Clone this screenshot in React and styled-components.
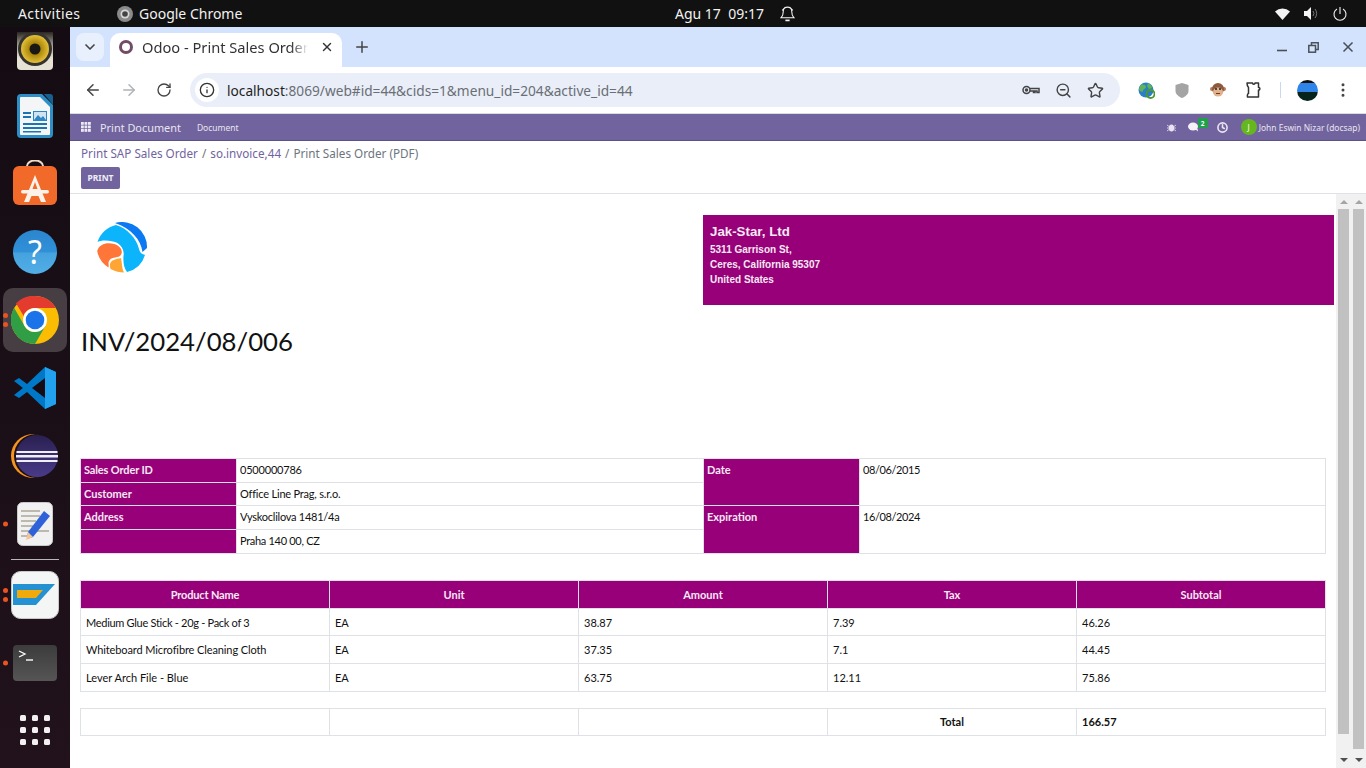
import React from 'react';
import styled, { createGlobalStyle } from 'styled-components';
import { ArrowLeft, ArrowRight, RotateCw, Star, ChevronDown, Plus, X, MoreVertical, ZoomOut, Clock, Info } from 'lucide-react';

const Global = createGlobalStyle`
  html, body { margin: 0; padding: 0; height: 768px; overflow: hidden; background: #fff; }
  * { box-sizing: border-box; }
  #root { height: 768px; }
`;
const Screen = styled.div`display:flex;flex-direction:column;width:1366px;height:768px;overflow:hidden;font-family:"Noto Sans",sans-serif;`;
const TopBar = styled.div`height:27px;flex:none;background:#111;color:#f2f2f2;display:flex;align-items:center;font-size:14px;position:relative;`;
const Activities = styled.span`margin-left:18px;width:99px;letter-spacing:.4px;`;
const AppName = styled.span`display:flex;align-items:center;gap:6px;`;
const Clocky = styled.div`position:absolute;left:675px;top:0;height:27px;display:flex;align-items:center;gap:16px;font-size:14px;`;
const Status = styled.div`margin-left:auto;display:flex;align-items:center;gap:14px;padding-right:19px;`;
const Body = styled.div`flex:1;display:flex;min-height:0;`;
const Dock = styled.div`width:70px;flex:none;background:linear-gradient(180deg,#140c12,#21121c);display:flex;flex-direction:column;align-items:center;position:relative;overflow:hidden;`;
const DockItem = styled.div`margin-top:${p=>p.$top}px;height:${p=>p.$h}px;display:flex;align-items:center;justify-content:center;flex:none;position:relative;width:${p=>p.$active?64:48}px;border-radius:${p=>p.$active?10:0}px;background:${p=>p.$active?'#473e43':'transparent'};`;
const DockSep = styled.div`margin-top:13px;width:48px;height:1px;flex:none;background:#b9b5b8;`;
const Dots = styled.div`position:absolute;left:${p=>p.$left}px;top:50%;transform:translateY(-50%);display:flex;flex-direction:column;gap:4px;`;
const Dot = styled.i`display:block;width:5px;height:5px;border-radius:50%;background:#e95420;`;
const Browser = styled.div`flex:1;display:flex;flex-direction:column;min-width:0;`;
const TabStrip = styled.div`height:40px;flex:none;background:#d3e3fd;display:flex;align-items:flex-start;padding:6px 0 0 6px;color:#444;`;
const TabMenu = styled.div`width:28px;height:28px;border-radius:8px;background:#e9f0fd;display:flex;align-items:center;justify-content:center;`;
const Tab = styled.div`margin-left:6px;width:232px;height:34px;background:#fff;border-radius:10px 10px 0 0;display:flex;align-items:center;padding:0 8px 6px 9px;font-size:14.65px;color:#333;`;
const TabRing = styled.span`width:14px;height:14px;border-radius:50%;border:3px solid #714b67;flex:none;margin-right:9px;`;
const TabTitle = styled.span`flex:1;margin-right:12px;white-space:nowrap;overflow:hidden;-webkit-mask-image:linear-gradient(90deg,#000 90%,transparent);mask-image:linear-gradient(90deg,#000 90%,transparent);`;
const NewTab = styled.div`margin:5px 0 0 11px;display:flex;`;
const WinBtns = styled.div`margin-left:auto;display:flex;align-items:center;gap:21px;height:28px;padding-right:10px;color:#4a5058;`;
const Toolbar = styled.div`height:47px;flex:none;background:#fff;border-radius:8px 8px 0 0;display:flex;align-items:center;padding:0 0 0 14px;border-bottom:1px solid #dcdcdc;color:#444;`;
const NavBtns = styled.div`display:flex;align-items:center;gap:18px;width:106px;`;
const Omni = styled.div`width:930px;height:34px;border-radius:17px;background:#e9eef8;display:flex;align-items:center;padding:0 16px 0 5px;font-size:13.7px;color:#6a6e75;`;
const InfoChip = styled.span`width:24px;height:24px;border-radius:50%;background:#fff;display:flex;align-items:center;justify-content:center;margin-right:8px;color:#333;`;
const Host = styled.span`color:#1f1f1f;`;
const OmniIcons = styled.div`margin-left:auto;display:flex;align-items:center;gap:15px;color:#444;`;
const Exts = styled.div`display:flex;align-items:center;margin-left:8px;`;
const ExtSlot = styled.span`width:36px;display:flex;justify-content:center;align-items:center;`;
const ExtDivider = styled.span`width:1px;height:16px;background:#c8d8f3;margin:0 16px 0 8px;`;
const Avatar = styled.span`width:21px;height:21px;border-radius:50%;overflow:hidden;background:linear-gradient(180deg,#111 0 15%,#2f84ea 15% 55%,#06231c 55%);margin-right:16px;`;
const OdooNav = styled.div`height:27px;flex:none;background:#71639e;border-bottom:1px solid #5d5286;color:#e8e5f0;display:flex;align-items:center;padding:0 6px 0 11px;font-size:11px;`;
const Brand = styled.span`font-size:10.9px;margin:0 16px 0 9px;`;
const MenuItem = styled.span`font-size:8.5px;`;
const NavRight = styled.div`margin-left:auto;display:flex;align-items:center;font-size:8.45px;`;
const Bubble = styled.span`position:relative;display:flex;margin:0 18px 0 12px;`;
const Badge = styled.span`position:absolute;left:10px;top:-4px;width:10px;height:10px;background:#21a04c;color:#fff;font-size:6.5px;font-weight:700;border-radius:1px;display:flex;align-items:center;justify-content:center;`;
const UserDot = styled.span`width:16px;height:16px;border-radius:50%;background:#66b71e;color:#fff;font-size:8px;display:flex;align-items:center;justify-content:center;margin:0 2px 0 13px;`;
const Control = styled.div`height:53px;flex:none;border-bottom:1px solid #dee2e6;padding:4px 11px 0;background:#fff;`;
const Crumbs = styled.div`font-size:11.7px;color:#71639e;height:17px;line-height:17px;display:flex;gap:4px;`;
const CrumbLast = styled.span`color:#6c757d;`;
const PrintBtn = styled.button`display:block;margin-top:5px;width:39px;height:22px;padding:0 0 2px;border:none;border-radius:2px;background:#71639e;color:#f0eef6;font:700 8.5px "Noto Sans",sans-serif;`;
const Content = styled.div`flex:1;display:flex;min-height:0;background:#fff;`;
const Doc = styled.div`width:1266px;flex:none;padding:21px 2px 0 10px;font-family:Lato,sans-serif;overflow:hidden;`;
const Head = styled.div`display:flex;height:90px;`;
const LogoCell = styled.div`width:623px;flex:none;padding:7px 0 0 17px;`;
const Company = styled.div`flex:1;background:#970079;color:#f7e9f4;font:700 10px/15px "Liberation Sans",sans-serif;padding:8px 7px;`;
const CompanyName = styled.div`font-size:13.3px;line-height:17px;margin-bottom:2px;`;
const Title = styled.h1`margin:20px 0 0 1px;height:133px;font:400 25.75px/33px Lato,sans-serif;color:#111;`;
const Tbl = styled.table`border-collapse:collapse;table-layout:fixed;width:1245px;font-size:11px;color:#111;margin-bottom:${p=>p.$mb||0}px;`;
const Col = styled.col`width:${p=>p.$w}px;`;
const Lab = styled.td`background:#970079;color:#f7e9f4;font-weight:700;border:1px solid #dee2e6;padding:0 3px 2px;vertical-align:middle;height:23.7px;letter-spacing:${p=>p.$ls||0}px;${p=>p.$top&&'vertical-align:top;padding-top:4px;'}`;
const Val = styled.td`border:1px solid #dee2e6;padding:0 3px 2px;height:23.7px;vertical-align:middle;letter-spacing:${p=>p.$ls||0}px;${p=>p.$top&&'vertical-align:top;padding-top:4px;'}`;
const Th = styled.th`background:#970079;color:#f7e9f4;font-weight:700;border:1px solid #dee2e6;height:28px;padding:0;text-align:center;letter-spacing:${p=>p.$ls||0}px;`;
const Td = styled.td`border:1px solid #dee2e6;height:${p=>p.$h||27.7}px;padding:0 5px;letter-spacing:${p=>p.$ls||0}px;${p=>p.$b&&'font-weight:700;'}${p=>p.$c&&'text-align:center;'}`;
const Scrolls = styled.div`flex:1;background:#f1f1f1;display:flex;justify-content:space-between;padding:0 0 0 2px;`;
const Bar = styled.div`width:11px;display:flex;flex-direction:column;align-items:center;margin-right:${p=>p.$mr||0}px;`;
const Thumb = styled.div`width:100%;height:${p=>p.$h}px;background:#c1c1c1;flex:none;`;
const ArrowUp = styled.i`display:block;margin:6px 0 5px;width:0;height:0;border:4px solid transparent;border-top:0;border-bottom:4px solid #a5a5a5;`;
const ArrowDown = styled.i`display:block;margin-top:${p=>p.$mt}px;width:0;height:0;border:4px solid transparent;border-bottom:0;border-top:4px solid #505050;`;

const Speaker = () => (<svg width="36" height="38" viewBox="0 0 36 38"><defs><linearGradient id="sp" x1="0" y1="0" x2="0" y2="1"><stop offset="0" stopColor="#2a2622"/><stop offset=".35" stopColor="#a39f92"/><stop offset=".7" stopColor="#e6e2d6"/></linearGradient><radialGradient id="go"><stop offset=".4" stopColor="#a98408"/><stop offset="1" stopColor="#e3bf3a"/></radialGradient></defs><path d="M0 0h36v34a4 4 0 0 1-4 4H4a4 4 0 0 1-4-4z" fill="url(#sp)"/><circle cx="18" cy="17" r="17" fill="#34332f"/><circle cx="18" cy="17" r="14" fill="url(#go)"/><circle cx="18" cy="17" r="5.500" fill="#191814"/></svg>);
const Writer = () => (<svg width="36" height="44" viewBox="0 0 36 44"><path d="M4 0h21l11 11v29a4 4 0 0 1-4 4H4a4 4 0 0 1-4-4V4a4 4 0 0 1 4-4z" fill="#2e8fc6"/><path d="M4 3h19l10 10v27a1 1 0 0 1-1 1H4a1 1 0 0 1-1-1V4a1 1 0 0 1 1-1z" fill="#f3f5f6"/><path d="M27 0h6a3 3 0 0 1 3 3v8z" fill="#17608f"/><rect x="16" y="17" width="14" height="10" fill="#2a86c4"/><rect x="17" y="18" width="12" height="8" fill="#cfe3f1"/><path d="M17 26l4-5 3 3 2-2 3 4z" fill="#2a86c4"/><path d="M6 18h8v2H6zM6 22h8v2H6zM6 29h24v2H6zM6 33h24v2H6zM6 37h18v1.500H6z" fill="#1b74b3"/></svg>);
const Store = () => (<svg width="44" height="45" viewBox="0 0 44 45"><path d="M14 8V6a8 5.500 0 0 1 16 0v2" fill="none" stroke="#f1d9c4" strokeWidth="2"/><rect y="6" width="44" height="39" rx="6" fill="#f26a2a"/><path d="M22 15l11 27h-5l-2.500-6h-7L16 42h-5z" fill="#fdf2ea"/><rect x="8" y="30" width="28" height="3.500" rx="1.700" fill="#fdf2ea"/><path d="M19.500 29h5L22 22z" fill="#f26a2a"/></svg>);
const Help = () => (<svg width="44" height="44" viewBox="0 0 44 44"><defs><linearGradient id="h" x1="0" y1="0" x2="0" y2="1"><stop offset="0" stopColor="#2b86cf"/><stop offset=".5" stopColor="#2f90d8"/><stop offset=".52" stopColor="#45a2de"/><stop offset="1" stopColor="#52aee6"/></linearGradient></defs><circle cx="22" cy="22" r="22" fill="url(#h)"/><text x="22" y="34" textAnchor="middle" fontFamily="Noto Sans" fontSize="32" fill="#fff">?</text></svg>);
const Chrome = () => (<svg width="48" height="48" viewBox="0 0 48 48"><circle cx="24" cy="24" r="24" fill="#fbbc04"/><path d="M24 0a24 24 0 0 1 20.800 12H24a12 12 0 0 0-11.300 8L5 7.300A24 24 0 0 1 24 0z" fill="#e33b2e"/><path d="M3.200 12A24 24 0 0 0 24 48l10.500-18.200L24 36a12 12 0 0 1-10.400-6z" fill="#2f9e44"/><circle cx="24" cy="24" r="12" fill="#fff"/><circle cx="24" cy="24" r="9.300" fill="#1a73e8"/></svg>);
const VSCode = () => (<svg width="42" height="42" viewBox="0 0 42 42"><path d="M31 0l11 5v32l-11 5-18-17-8 6-5-3 9-7-9-7 5-3 8 6z" fill="#0078c8"/><path d="M31 0l11 5v32l-11 5z" fill="#22a2ee"/><path d="M31 11L18 21l13 10z" fill="#140c12"/></svg>);
const Eclipse = () => (<svg width="48" height="44" viewBox="0 0 48 44"><defs><linearGradient id="ec" x1="0" y1="0" x2="0" y2="1"><stop offset="0" stopColor="#2a2050"/><stop offset="1" stopColor="#4a3a8a"/></linearGradient></defs><circle cx="22" cy="22" r="22" fill="#f7941e"/><circle cx="25" cy="22" r="22" fill="#1b1019"/><circle cx="26" cy="22" r="21" fill="url(#ec)"/><path d="M5.500 17h41v2h-41zM5 21h42v2.500H5zM5.500 26h41v2h-41z" fill="#efedf5"/></svg>);
const Editor = () => (<svg width="36" height="44" viewBox="0 0 36 44"><rect x=".5" y=".5" width="35" height="43" rx="5" fill="#f1f1f1" stroke="#c9c9c9"/><path d="M4 8h19v2H4zM4 13h19v2H4zM4 18h15v2H4zM4 23h12v2H4zM4 28h28v2H4zM4 33h9v2H4z" fill="#bdb9ad"/><path d="M27 9l6 5-17 21-6 2 1-7z" fill="#2f62d8"/><path d="M11 30l5 5-7 3z" fill="#f3c595"/></svg>);
const Sap = () => (<svg width="48" height="48" viewBox="0 0 48 48"><rect x=".5" y=".5" width="47" height="47" rx="9" fill="#f4f5f5" stroke="#c8c8c8"/><path d="M2 13H44L25 34H2z" fill="#2391d2"/><path d="M6 19H32L25 27H6z" fill="#f0aa0c"/></svg>);
const Terminal = () => (<svg width="44" height="36" viewBox="0 0 44 36"><defs><linearGradient id="te" x1="0" y1="0" x2="0" y2="1"><stop offset="0" stopColor="#3c3c3c"/><stop offset="1" stopColor="#555"/></linearGradient></defs><rect width="44" height="36" rx="4" fill="url(#te)"/><path d="M6 6l6 3-6 3" fill="none" stroke="#fff" strokeWidth="1.300"/><path d="M13 15h7" stroke="#fff" strokeWidth="1.400"/></svg>);
const AppGrid = () => (<svg width="30" height="30" viewBox="0 0 30 30" fill="#f2f0f1">{[0,12,24].flatMap(y=>[0,12,24].map(x=><rect key={x+'-'+y} x={x} y={y} width="6" height="6" rx="1.500"/>))}</svg>);
const Logo = () => (<svg width="53" height="53" viewBox="8 7 53 53">
  <path d="M26 8A25 25 0 0 1 58 33L53.500 37C52 25 42 13 26 8Z" fill="#0a79f2"/>
  <path d="M8.500 27A25 25 0 0 1 27 10C38 13 48 24 50 34C51 38 53 39 56 40A25 25 0 0 1 38 57C35 53 34 47 34.500 41C36 34 30 27 24 26.500C18 25 12 25 8.500 27Z" fill="#0cb4fb"/>
  <path d="M8.200 36C10 29 18 27 25 29C32 31 35 37 31 41C27 43 22 42 20 46C19 48 20 50 19.500 52.500A25 25 0 0 1 8.200 36Z" fill="#ff7638"/>
  <path d="M21 49C22 45 27 44 32 43C33 48 33 54 35 57.500C31 57.500 26 56.500 21.500 54C21 52 21 51 21 49Z" fill="#ffa534"/>
</svg>);
const Wifi = () => (<svg width="15" height="12" viewBox="0 0 15 12"><path d="M0 3.500A11 11 0 0 1 15 3.500L7.500 12z" fill="#f4f4f4"/></svg>);
const Volume = () => (<svg width="15" height="13" viewBox="0 0 15 13"><path d="M0 4h3l4-4v13l-4-4H0z" fill="#f4f4f4"/><path d="M9 4a4 4 0 0 1 0 5M11 2a7 7 0 0 1 0 9" fill="none" stroke="#777" strokeWidth="1"/></svg>);
const Power = () => (<svg width="14" height="14" viewBox="0 0 14 14" fill="none" stroke="#f4f4f4" strokeWidth="1.100"><path d="M7 0v7M4 2A6 6 0 1 0 10 2"/></svg>);
const Bell = () => (<svg width="15" height="17" viewBox="0 0 14 16" fill="none" stroke="#f4f4f4" strokeWidth="1"><path d="M1 12c1-1 2-2 2-6a4 4 0 0 1 8 0c0 4 1 5 2 6zM5 2l-3 3M9 2l3 3"/><path d="M5 14.500h4" strokeWidth="1.600"/></svg>);
const ChromeMono = () => (<svg width="16" height="16" viewBox="0 0 16 16"><circle cx="8" cy="8" r="8" fill="#8a8a8a"/><circle cx="8" cy="8" r="4.500" fill="#d8d8d8"/><circle cx="8" cy="8" r="2.800" fill="#444"/></svg>);
const Key = () => (<svg width="18" height="12" viewBox="0 0 18 12" fill="none" stroke="#444" strokeWidth="1.500"><circle cx="4.500" cy="6" r="3.500"/><circle cx="4.500" cy="6" r="1" fill="#444"/><path d="M8 4.500h9v4h-2V7h-2v1.500h-1.500V7H8"/></svg>);
const Globe = () => (<svg width="17" height="17" viewBox="0 0 17 17"><circle cx="8" cy="8" r="7.500" fill="#2a7fc9"/><path d="M3 3c3-1 5 0 5 2s-3 2-3 4-3 0-4-1c0-2 1-4 2-5zM10 1c2 1 4 3 4 5l-3 1-2-3z" fill="#5fb257"/><circle cx="12.500" cy="12" r="4" fill="none" stroke="#4d9a2a" strokeWidth="1.800"/></svg>);
const Shield = () => (<svg width="14" height="15" viewBox="0 0 14 15"><path d="M7 0l6.500 2v6c0 3-3 5.500-6.500 7C3.500 13.500.5 11 .5 8V2z" fill="#a4a4a4"/></svg>);
const Monkey = () => (<svg width="16" height="14" viewBox="0 0 16 14"><circle cx="2" cy="6" r="2" fill="#b5795a"/><circle cx="14" cy="6" r="2" fill="#b5795a"/><circle cx="8" cy="6" r="6" fill="#8c5a3c"/><ellipse cx="8" cy="9" rx="5" ry="4.500" fill="#e2b18e"/><circle cx="6" cy="6" r="1" fill="#222"/><circle cx="10" cy="6" r="1" fill="#222"/><path d="M6 10.500h4" stroke="#6d3d24"/></svg>);
const Ext = () => (<svg width="16" height="16" viewBox="0 0 16 16" fill="none" stroke="#333" strokeWidth="1.500" strokeLinejoin="round"><path d="M1 1h5.500c0 1.500 2.500 1.500 2.500 0h3.500v4.500c1.800-.5 1.800 3 0 2.500v7H1.500c-.3-1.500 0-3.500 1-3.500V5.500C2 5 1 3 1 1z"/></svg>);
const Minimize = () => (<svg width="10" height="10" viewBox="0 0 10 10"><path d="M0 8.500h10" stroke="#4a5058" strokeWidth="1.600"/></svg>);
const Restore = () => (<svg width="11" height="11" viewBox="0 0 11 11" fill="none" stroke="#4a5058" strokeWidth="1.500"><path d="M3.500 3V.8h6.700v6.700H8"/><rect x=".8" y="3.500" width="6.700" height="6.700"/></svg>);
const Bug = () => (<svg width="9" height="9" viewBox="0 0 9 9" fill="#e8e5f0"><ellipse cx="4.500" cy="5" rx="2.700" ry="3.500"/><path d="M0 2l2 1.500M9 2L7 3.500M0 5h2M7 5h2M0 8l2-1.500M9 8L7 6.500" stroke="#e8e5f0" strokeWidth=".8"/></svg>);
const Comments = () => (<svg width="11" height="10" viewBox="0 0 11 10" fill="#f4f2f8"><ellipse cx="5" cy="4.500" rx="5" ry="4"/><path d="M7 7l3 2.500-.5-3z"/></svg>);
const GridDots = () => (<svg width="10" height="10" viewBox="0 0 10 10" fill="#eeeaf5">{[0,3.500,7].flatMap(y=>[0,3.500,7].map(x=><rect key={x+'-'+y} x={x} y={y} width="2.800" height="2.800"/>))}</svg>);

const rows = [
  { ls: -0.29, cells: ['Medium Glue Stick - 20g - Pack of 3','EA','38.87','7.39','46.26'] },
  { ls: -0.11, cells: ['Whiteboard Microfibre Cleaning Cloth','EA','37.35','7.1','44.45'] },
  { ls: 0, cells: ['Lever Arch File - Blue','EA','63.75','12.11','75.86'] },
];
const cols = [249,249,249,249,249];
const Cols5 = () => <colgroup>{cols.map((w,i)=><Col key={i} $w={w}/>)}</colgroup>;

export default function App(){
  return (<Screen><Global/>
    <TopBar>
      <Activities>Activities</Activities>
      <AppName><ChromeMono/>Google Chrome</AppName>
      <Clocky><span>Agu 17&nbsp; 09:17</span><Bell/></Clocky>
      <Status><Wifi/><Volume/><Power/></Status>
    </TopBar>
    <Body>
      <Dock>
        <DockItem $top={5} $h={38}><Speaker/></DockItem>
        <DockItem $top={24} $h={44}><Writer/></DockItem>
        <DockItem $top={22} $h={45}><Store/></DockItem>
        <DockItem $top={25} $h={44}><Help/></DockItem>
        <DockItem $top={14} $h={64} $active><Chrome/><Dots $left={0}><Dot/><Dot/></Dots></DockItem>
        <DockItem $top={15} $h={42}><VSCode/></DockItem>
        <DockItem $top={25} $h={44}><Eclipse/></DockItem>
        <DockItem $top={24} $h={44}><Editor/><Dots $left={-8}><Dot/></Dots></DockItem>
        <DockSep/>
        <DockItem $top={11} $h={48}><Sap/><Dots $left={-8}><Dot/><Dot/></Dots></DockItem>
        <DockItem $top={26} $h={36}><Terminal/><Dots $left={-8}><Dot/></Dots></DockItem>
        <DockItem $top={34} $h={30}><AppGrid/></DockItem>
      </Dock>
      <Browser>
        <TabStrip>
          <TabMenu><ChevronDown size={16} strokeWidth={2.5}/></TabMenu>
          <Tab><TabRing/><TabTitle>Odoo - Print Sales Order</TabTitle><X size={14} strokeWidth={2.5}/></Tab>
          <NewTab><Plus size={18}/></NewTab>
          <WinBtns><Minimize/><Restore/><X size={16} strokeWidth={2.5}/></WinBtns>
        </TabStrip>
        <Toolbar>
          <NavBtns><ArrowLeft size={18}/><ArrowRight size={18} color="#b0b3b8"/><RotateCw size={16}/></NavBtns>
          <Omni>
            <InfoChip><Info size={16}/></InfoChip>
            <Host>localhost</Host>:8069/web#id=44&amp;cids=1&amp;menu_id=204&amp;active_id=44
            <OmniIcons><Key/><ZoomOut size={17}/><Star size={17}/></OmniIcons>
          </Omni>
          <Exts>
            <ExtSlot><Globe/></ExtSlot><ExtSlot><Shield/></ExtSlot><ExtSlot><Monkey/></ExtSlot><ExtSlot><Ext/></ExtSlot>
            <ExtDivider/><Avatar/><MoreVertical size={18}/>
          </Exts>
        </Toolbar>
        <OdooNav>
          <GridDots/><Brand>Print Document</Brand><MenuItem>Document</MenuItem>
          <NavRight><Bug/><Bubble><Comments/><Badge>2</Badge></Bubble><Clock size={11} strokeWidth={3.5}/><UserDot>J</UserDot>John Eswin Nizar (docsap)</NavRight>
        </OdooNav>
        <Control>
          <Crumbs><span>Print SAP Sales Order</span><CrumbLast>/</CrumbLast><span>so.invoice,44</span><CrumbLast>/</CrumbLast><CrumbLast>Print Sales Order (PDF)</CrumbLast></Crumbs>
          <PrintBtn>PRINT</PrintBtn>
        </Control>
        <Content>
          <Doc>
            <Head>
              <LogoCell><Logo/></LogoCell>
              <Company><CompanyName>Jak-Star, Ltd</CompanyName>5311 Garrison St,<br/>Ceres, California 95307<br/>United States</Company>
            </Head>
            <Title>INV/2024/08/006</Title>
            <Tbl $mb={26}>
              <colgroup><Col $w={156}/><Col $w={467}/><Col $w={156}/><Col $w={466}/></colgroup>
              <tbody>
                <tr><Lab $ls={-0.14}>Sales Order ID</Lab><Val $ls={-0.2}>0500000786</Val><Lab rowSpan={2} $top>Date</Lab><Val rowSpan={2} $top $ls={-0.4}>08/06/2015</Val></tr>
                <tr><Lab>Customer</Lab><Val $ls={-0.2}>Office Line Prag, s.r.o.</Val></tr>
                <tr><Lab>Address</Lab><Val $ls={-0.25}>Vyskoclilova 1481/4a</Val><Lab rowSpan={2} $top>Expiration</Lab><Val rowSpan={2} $top $ls={-0.4}>16/08/2024</Val></tr>
                <tr><Lab/><Val $ls={-0.3}>Praha 140 00, CZ</Val></tr>
              </tbody>
            </Tbl>
            <Tbl $mb={16}>
              <Cols5/>
              <thead><tr><Th $ls={-0.15}>Product Name</Th><Th>Unit</Th><Th>Amount</Th><Th>Tax</Th><Th>Subtotal</Th></tr></thead>
              <tbody>{rows.map(r=><tr key={r.cells[0]}>{r.cells.map((c,i)=><Td key={i} $ls={i===0?r.ls:0}>{c}</Td>)}</tr>)}</tbody>
            </Tbl>
            <Tbl>
              <Cols5/>
              <tbody><tr><Td $h={27}/><Td $h={27}/><Td $h={27}/><Td $h={27} $b $c>Total</Td><Td $h={27} $b>166.57</Td></tr></tbody>
            </Tbl>
          </Doc>
          <Scrolls>
            <Bar><ArrowUp/><Thumb $h={525}/><ArrowDown $mt={24}/></Bar>
            <Bar $mr={2}><ArrowUp/><Thumb $h={540}/><ArrowDown $mt={9}/></Bar>
          </Scrolls>
        </Content>
      </Browser>
    </Body>
  </Screen>);
}
